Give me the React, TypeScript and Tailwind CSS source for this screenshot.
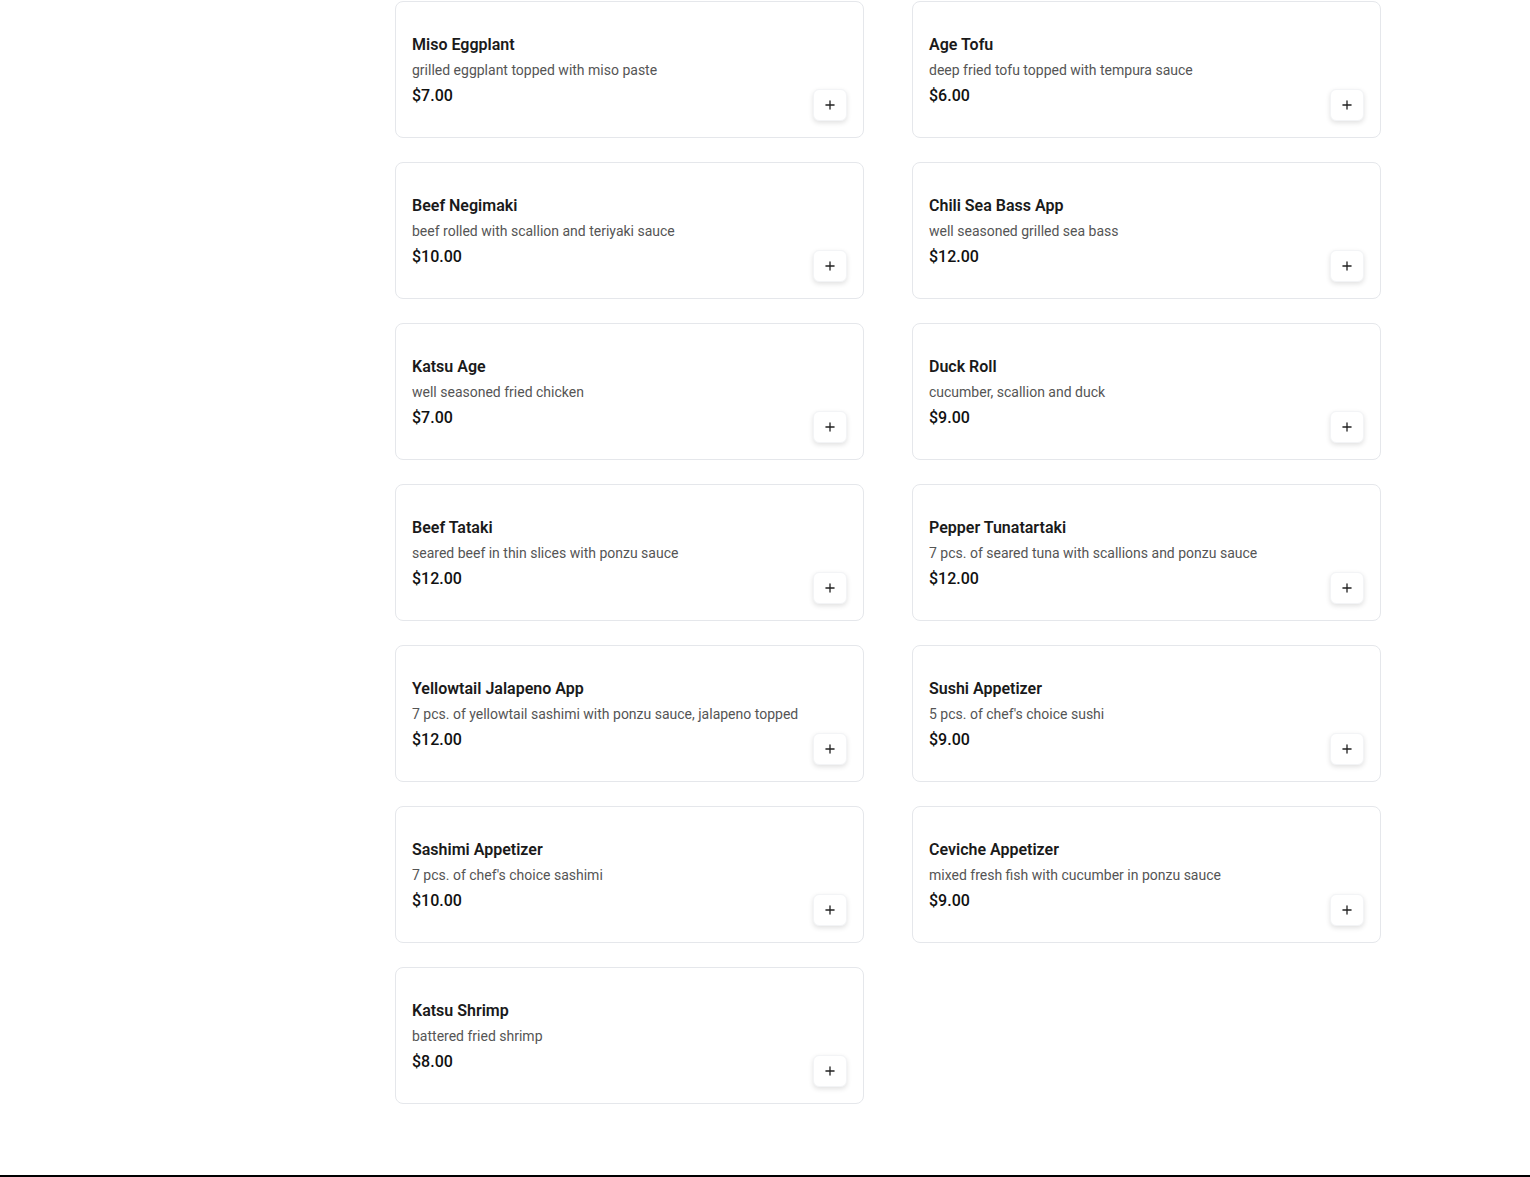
import { Plus } from 'lucide-react';

type MenuItem = {
  name: string;
  description: string;
  price: number;
};

const items: MenuItem[] = [
  { name: 'Miso Eggplant', description: 'grilled eggplant topped with miso paste', price: 7 },
  { name: 'Age Tofu', description: 'deep fried tofu topped with tempura sauce', price: 6 },
  { name: 'Beef Negimaki', description: 'beef rolled with scallion and teriyaki sauce', price: 10 },
  { name: 'Chili Sea Bass App', description: 'well seasoned grilled sea bass', price: 12 },
  { name: 'Katsu Age', description: 'well seasoned fried chicken', price: 7 },
  { name: 'Duck Roll', description: 'cucumber, scallion and duck', price: 9 },
  { name: 'Beef Tataki', description: 'seared beef in thin slices with ponzu sauce', price: 12 },
  { name: 'Pepper Tunatartaki', description: '7 pcs. of seared tuna with scallions and ponzu sauce', price: 12 },
  { name: 'Yellowtail Jalapeno App', description: '7 pcs. of yellowtail sashimi with ponzu sauce, jalapeno topped', price: 12 },
  { name: 'Sushi Appetizer', description: "5 pcs. of chef's choice sushi", price: 9 },
  { name: 'Sashimi Appetizer', description: "7 pcs. of chef's choice sashimi", price: 10 },
  { name: 'Ceviche Appetizer', description: 'mixed fresh fish with cucumber in ponzu sauce', price: 9 },
  { name: 'Katsu Shrimp', description: 'battered fried shrimp', price: 8 },
];

function MenuCard({ item }: { item: MenuItem }) {
  return (
    <div className="flex h-[137px] items-center justify-between rounded-lg border border-gray-200 bg-white p-4">
      <div className="flex flex-col pt-[2px]">
        <h3 className="text-base leading-6 font-semibold text-[#1a1a1a]">{item.name}</h3>
        <p className="mt-[3px] text-sm leading-5 text-[#555]">{item.description}</p>
        <p className="mt-1 text-base leading-6 font-medium text-[#111]">${item.price.toFixed(2)}</p>
      </div>
      <button className="flex h-8 w-[34px] shrink-0 items-center justify-center self-end rounded-md border border-gray-100 bg-white shadow-[0_2px_5px_rgba(0,0,0,0.12)]">
        <Plus size={14} strokeWidth={2.25} className="text-[#222]" />
      </button>
    </div>
  );
}

export default function App() {
  return (
    <div className="min-h-screen bg-white" style={{ fontFamily: 'Roboto, "Open Sans", sans-serif' }}>
      <main className="pt-px pr-[149px] pb-[71px] pl-[395px]">
        <div className="grid grid-cols-2 gap-x-12 gap-y-6">
          {items.map((item) => (
            <MenuCard key={item.name} item={item} />
          ))}
        </div>
      </main>
      <footer className="h-24 bg-black" />
    </div>
  );
}
